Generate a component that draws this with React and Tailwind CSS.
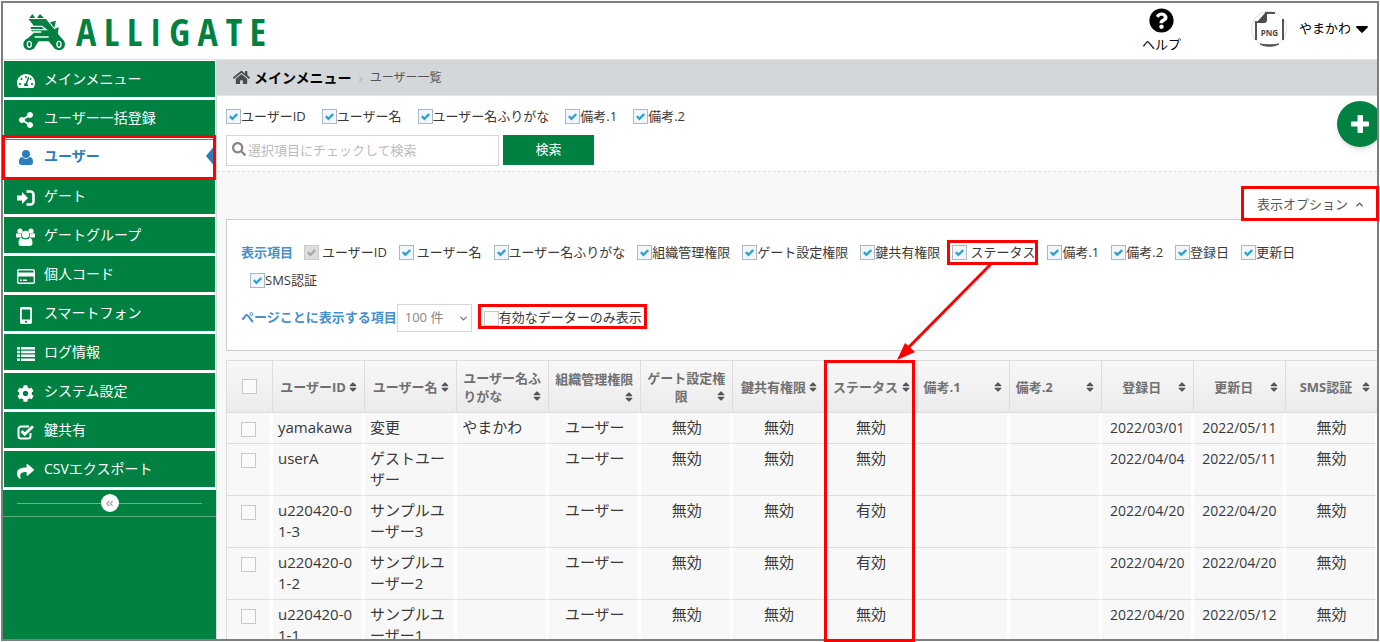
import React, { useState } from 'react';
import {
    FaTachometerAlt,
    FaShareAlt,
    FaCog,
    FaShare,
    FaHome,
    FaSearch,
    FaSort,
    FaQuestionCircle,
    FaAngleDoubleLeft,
} from 'react-icons/fa';
import { LuChevronDown, LuChevronUp } from 'react-icons/lu';

const UserIcon = () => (
    <svg width="14" height="15" viewBox="0 0 14 15" fill="currentColor">
        <circle cx="7" cy="4" r="4" />
        <path d="M0 12.200C0 9.200.9 7 3.200 7 4.300 8.200 5.600 8.800 7 8.800S9.700 8.200 10.800 7C13.100 7 14 9.200 14 12.200 14 14 13 15 11.500 15h-9C1 15 0 14 0 12.200z" />
    </svg>
);

const SignInIcon = () => (
    <svg width="18" height="16" viewBox="0 0 18 16" fill="none">
        <path d="M0 5.500h5V2l6 6-6 6v-3.500H0z" fill="currentColor" />
        <path d="M9.500 1.500h4a3 3 0 0 1 3 3v7a3 3 0 0 1-3 3h-4" stroke="currentColor" strokeWidth="2.600" />
    </svg>
);

const GroupIcon = () => (
    <svg width="19" height="18" viewBox="0 0 19 18" fill="currentColor">
        <circle cx="4" cy="3" r="2.600" />
        <circle cx="15" cy="3" r="2.600" />
        <path d="M0 9V7c0-1.500.8-2 2-1.500 1.200.6 2.200.6 3.200 0A5 5 0 0 0 6 9.500H1.500C.5 9.500 0 9.400 0 9zM19 9V7c0-1.500-.8-2-2-1.500-1.200.6-2.200.6-3.200 0A5 5 0 0 1 13 9.500h4.500c1 0 1.500-.1 1.500-.5z" />
        <circle cx="9.500" cy="6.500" r="3.700" />
        <path d="M2.500 15.200c0-3.200.8-5.200 3-5.200 1.200 1 2.500 1.400 4 1.400s2.800-.4 4-1.400c2.200 0 3 2 3 5.200 0 1.800-1 2.800-2.600 2.800H5.100c-1.600 0-2.600-1-2.600-2.800z" />
    </svg>
);

const CardIcon = () => (
    <svg width="18" height="15" viewBox="0 0 18 15" fill="none">
        <rect x="0.700" y="0.700" width="16.600" height="13.600" rx="1.400" stroke="currentColor" strokeWidth="1.400" />
        <path d="M1 3.500h16v4H1zM3 10.500h2v1.500H3zM6 10.500h4v1.500H6z" fill="currentColor" />
    </svg>
);

const MobileIcon = () => (
    <svg width="12" height="17" viewBox="0 0 12 17" fill="currentColor" fillRule="evenodd">
        <path d="M1.800 0h8.400A1.800 1.800 0 0 1 12 1.800v13.400a1.800 1.800 0 0 1-1.800 1.800H1.800A1.800 1.800 0 0 1 0 15.200V1.800A1.800 1.800 0 0 1 1.800 0zM1.800 2.500v10h8.400v-10zM6 13.700a1.100 1.100 0 1 0 0 2.200 1.100 1.100 0 0 0 0-2.200z" />
    </svg>
);

const ListIcon = () => (
    <svg width="18" height="14" viewBox="0 0 18 14" fill="currentColor">
        <path d="M0 0h3v2.500H0zM4 0h14v2.500H4zM0 3.800h3v2.500H0zM4 3.800h14v2.500H4zM0 7.600h3v2.500H0zM4 7.600h14v2.500H4zM0 11.400h3v2.500H0zM4 11.400h14v2.500H4z" />
    </svg>
);

const CheckBoxIcon = () => (
    <svg width="18" height="16" viewBox="0 0 18 16" fill="none" stroke="currentColor">
        <path d="M13.500 9v3a2.500 2.500 0 0 1-2.500 2.500H4A2.500 2.500 0 0 1 1.500 12V5A2.500 2.500 0 0 1 4 2.500h8" strokeWidth="2" />
        <path d="M4.500 7l3.200 3.200L16 2.300" strokeWidth="2.800" />
    </svg>
);

const AlligateMark = () => (
    <svg width="54" height="46" viewBox="0 0 162 138" fill="#008142">
        <path d="M34 30L43 18L52 30zM57 30L66 18L78 30z" />
        <path d="M96 43L114 38L109 60zM108 64L122 57L120 78z" />
        <path d="M31 33H84L137 98L112 124L92 100H62L46 124L20 99L48 74L38 66V58L48 56L42 46z" />
        <path d="M36 55H72L84 65H36" fill="none" stroke="#fff" strokeWidth="4" />
        <path d="M44 72H70M50 87H92" fill="none" stroke="#fff" strokeWidth="4" />
        <circle cx="34" cy="109" r="18" />
        <circle cx="123" cy="109" r="18" />
        <ellipse cx="34" cy="109" rx="6" ry="9" fill="none" stroke="#fff" strokeWidth="4" />
        <ellipse cx="123" cy="109" rx="6" ry="9" fill="none" stroke="#fff" strokeWidth="4" />
    </svg>
);

const menuItems = [
    { label: 'メインメニュー', icon: <FaTachometerAlt size={18} /> },
    { label: 'ユーザー一括登録', icon: <FaShareAlt size={16} /> },
    { label: 'ユーザー', icon: <UserIcon />, active: true },
    { label: 'ゲート', icon: <SignInIcon /> },
    { label: 'ゲートグループ', icon: <GroupIcon /> },
    { label: '個人コード', icon: <CardIcon /> },
    { label: 'スマートフォン', icon: <MobileIcon /> },
    { label: 'ログ情報', icon: <ListIcon /> },
    { label: 'システム設定', icon: <FaCog size={17} /> },
    { label: '鍵共有', icon: <CheckBoxIcon /> },
    { label: 'CSVエクスポート', icon: <FaShare size={17} /> },
];

const searchFields = ['ユーザーID', 'ユーザー名', 'ユーザー名ふりがな', '備考.1', '備考.2'];

const displayFields = [
    { label: 'ユーザーID', disabled: true, spaced: true },
    { label: 'ユーザー名', spaced: true },
    { label: 'ユーザー名ふりがな' },
    { label: '組織管理権限' },
    { label: 'ゲート設定権限' },
    { label: '鍵共有権限' },
    { label: 'ステータス', spaced: true },
    { label: '備考.1' },
    { label: '備考.2' },
    { label: '登録日' },
    { label: '更新日' },
    { label: 'SMS認証' },
];

const columns = [
    { label: 'ユーザーID' },
    { label: 'ユーザー名' },
    { label: 'ユーザー名ふりがな', left: true },
    { label: '組織管理権限' },
    { label: 'ゲート設定権限' },
    { label: '鍵共有権限' },
    { label: 'ステータス' },
    { label: '備考.1', left: true },
    { label: '備考.2', left: true },
    { label: '登録日' },
    { label: '更新日' },
    { label: 'SMS認証' },
];

const users = [
    { id: 'yamakawa', name: '変更', kana: 'やまかわ', status: '無効', created: '2022/03/01', updated: '2022/05/11' },
    { id: 'userA', name: 'ゲストユーザー', kana: '', status: '無効', created: '2022/04/04', updated: '2022/05/11' },
    { id: 'u220420-01-3', name: 'サンプルユーザー3', kana: '', status: '有効', created: '2022/04/20', updated: '2022/04/20' },
    { id: 'u220420-01-2', name: 'サンプルユーザー2', kana: '', status: '有効', created: '2022/04/20', updated: '2022/04/20' },
    { id: 'u220420-01-1', name: 'サンプルユーザー1', kana: '', status: '無効', created: '2022/04/20', updated: '2022/05/12' },
];

const Tick = ({ checked = false, disabled = false, ...rest }) => (
    <span className="relative block size-[15px] shrink-0">
        <input
            type="checkbox"
            defaultChecked={checked}
            disabled={disabled}
            className="peer block size-[15px] appearance-none border border-[#c8c8c8] bg-[#fafafa] checked:border-[#adb8c0] checked:bg-[#f1f6fb] disabled:border-[#ccc] disabled:bg-[#ddd]"
            {...rest}
        />
        <svg
            width="9"
            height="8"
            viewBox="0 0 9 8"
            className="pointer-events-none absolute left-[3px] top-1 hidden text-[#32a3ce] peer-checked:block peer-disabled:text-[#aaa]"
        >
            <path d="M0.800 3.200L3.400 5.800L8.200 1" fill="none" stroke="currentColor" strokeWidth="2.400" />
        </svg>
    </span>
);

const Header = () => (
    <header className="flex h-[57px] shrink-0 items-center justify-between border-b border-[#e0e2e4] bg-white pl-[15px] pr-[9px]">
        <a href="#top" aria-label="ALLIGATE" className="flex items-center gap-1 text-[#008142]">
            <AlligateMark />
            <span className="flex w-[190px] justify-between font-['Open_Sans_Condensed','Roboto_Condensed','Liberation_Sans_Narrow',sans-serif] text-[38px] font-bold leading-[46px]">
                {'ALLIGATE'.split('').map((letter, i) => (
                    <span key={i}>{letter}</span>
                ))}
            </span>
        </a>
        <div className="flex items-center text-[13px] text-black">
            <a href="#help" className="mr-[70px] flex flex-col items-center">
                <FaQuestionCircle size={25} />
                <span className="leading-[22px]">ヘルプ</span>
            </a>
            <button type="button" className="flex items-center pb-1">
                <svg width="36" height="36" viewBox="0 0 36 36" className="mr-3">
                    <circle cx="18" cy="18" r="17.500" fill="#fff" stroke="#ddd" />
                    <path d="M5 10v19M32 8v21M14 2h10" stroke="#555" strokeWidth="2" fill="none" />
                    <path d="M9 33C14 36 23 36 28 33C23 34 14 34 9 33z" fill="#555" stroke="#555" />
                    <path d="M5 12L14 2h2v7a3 3 0 0 1-3 3z" fill="#4a4d50" />
                    <text x="18.500" y="25" textAnchor="middle" fontSize="8" fontWeight="700" fill="#4a4d50" fontFamily="Open Sans, sans-serif">PNG</text>
                </svg>
                <span className="mr-[5px]">やまかわ</span>
                <svg width="12" height="7" viewBox="0 0 12 7">
                    <path d="M1 0h10a1 1 0 0 1 .6 1.500L6.700 6.600a1 1 0 0 1-1.400 0L.4 1.500A1 1 0 0 1 1 0z" fill="currentColor" />
                </svg>
            </button>
        </div>
    </header>
);

const Sidebar = () => (
    <aside className="flex w-[214px] shrink-0 flex-col border-r border-[#d5d8da] bg-[#008142]">
        <nav className="flex flex-col gap-[3px] bg-white px-px pb-[3px] pt-px">
            {menuItems.map((item) => (
                <a
                    key={item.label}
                    href="#menu"
                    className={
                        item.active
                            ? 'relative flex h-[36px] items-center border-t border-[#4a8f5c] bg-white pb-1 pl-3 text-sm font-bold text-[#2b7dbc]'
                            : 'flex h-[36px] items-center bg-[#008142] pl-3 text-sm text-white'
                    }
                >
                    <span className="mr-[9px] flex w-[19px] justify-center pt-1">{item.icon}</span>
                    <span>{item.label}</span>
                    {item.active && (
                        <span className="absolute right-0 h-0 w-0 border-y-[11px] border-r-[9px] border-y-transparent border-r-[#2b7dbc]" />
                    )}
                </a>
            ))}
        </nav>
        <div className="flex h-[27px] items-center border-b border-[#5cac82] px-[14px]">
            <span className="h-px flex-1 bg-[#66b18a]" />
            <button type="button" aria-label="collapse" className="flex size-[18px] items-center justify-center rounded-full bg-white text-[#aaa]">
                <FaAngleDoubleLeft size={9} />
            </button>
            <span className="h-px flex-1 bg-[#66b18a]" />
        </div>
    </aside>
);

const SearchBar = () => (
    <section className="relative shrink-0 border-b border-dashed border-[#dedede] bg-white px-[9px] pb-[5px] pt-[11px]">
        <div className="flex gap-4 text-[13px] leading-[18px] text-[#393939]">
            {searchFields.map((field) => (
                <label key={field} className="flex items-center">
                    <Tick checked />
                    {field}
                </label>
            ))}
        </div>
        <form className="mt-[10px] flex gap-1" onSubmit={(e) => e.preventDefault()}>
            <div className="relative w-[273px]">
                <FaSearch size={14} className="absolute left-[6px] top-[7px] text-[#888]" />
                <input
                    type="text"
                    aria-label="検索"
                    placeholder="選択項目にチェックして検索"
                    className="h-[31px] w-full border border-[#d5d5d5] pb-[2px] pl-[21px] text-[13px] placeholder:text-[#bbb]"
                />
            </div>
            <button type="submit" className="h-[30px] w-[91px] bg-[#008142] text-[13px] text-white">
                検索
            </button>
        </form>
        <button
            type="button"
            aria-label="add"
            className="absolute -right-[6px] top-[5px] flex size-[46px] items-center justify-center rounded-full bg-[#008142] text-white shadow-md"
        >
            <svg width="18" height="18" viewBox="0 0 18 18" fill="currentColor">
                <path d="M7 0h4a1 1 0 0 1 1 1v5.500h5a1 1 0 0 1 1 1v3a1 1 0 0 1-1 1h-5V17a1 1 0 0 1-1 1H7.500a1 1 0 0 1-1-1v-5.500H1a1 1 0 0 1-1-1v-3a1 1 0 0 1 1-1h5.500V1a1 1 0 0 1 1-1z" />
            </svg>
        </button>
    </section>
);

const DisplayOptions = ({ open, onToggle }) => (
    <section className="shrink-0 pl-[9px]">
        <div className="flex justify-end pt-4">
            <button type="button" onClick={onToggle} className="flex h-[31px] items-center gap-[6px] bg-white pl-[15px] pr-3 pt-[2px] text-[13px] text-[#555]">
                表示オプション
                {open ? <LuChevronUp size={11} strokeWidth={3} /> : <LuChevronDown size={11} strokeWidth={3} />}
            </button>
        </div>
        {open && (
            <div className="border border-r-0 border-[#ccc] bg-white pb-[18px] pl-[14px] pr-[5px] pt-[18px] text-[13px] text-[#393939]">
                <div className="flex flex-wrap leading-[28px]">
                    <span className="mr-[2px] font-bold text-[#478fca]">表示項目</span>
                    {displayFields.map((field) => (
                        <label
                            key={field.label}
                            className={field.spaced ? 'ml-[9px] mr-[3px] flex items-center gap-[3px]' : 'ml-[9px] mr-[3px] flex items-center'}
                        >
                            <Tick checked disabled={field.disabled} />
                            {field.label}
                        </label>
                    ))}
                </div>
                <div className="mt-[10px] flex items-center">
                    <label htmlFor="perPage" className="font-bold text-[#478fca]">
                        ページことに表示する項目
                    </label>
                    <div className="relative">
                        <select id="perPage" className="h-[28px] w-[75px] appearance-none border border-[#d5d5d5] bg-white pl-[7px] text-[13px] text-[#858585]">
                            <option>100 件</option>
                            <option>50 件</option>
                        </select>
                        <LuChevronDown size={11} strokeWidth={3} className="pointer-events-none absolute right-[3px] top-[9px] text-[#777]" />
                    </div>
                    <label className="ml-3 flex items-center">
                        <Tick />
                        有効なデーターのみ表示
                    </label>
                </div>
            </div>
        )}
    </section>
);

const cell = 'border-b border-b-[#ddd] border-l border-l-white border-r-2 border-r-white pl-[5px] pr-[3px] pb-[5px] pt-1 align-top leading-[21px]';

const UserTable = () => (
    <section className="min-h-0 overflow-hidden pl-[9px] pt-[9px]">
        <table className="w-full table-fixed border-separate border-spacing-0 text-[15px] text-[#393939]">
            <thead>
                <tr className="bg-linear-to-b from-[#f8f8f8] to-[#ebebeb] text-[13px] leading-[18px] text-[#707070]">
                    <th className="h-[53px] w-[46px] border border-r-0 border-[#ddd]">
                        <div className="flex justify-center">
                            <Tick aria-label="select all" />
                        </div>
                    </th>
                    {columns.map((column) => (
                        <th
                            key={column.label}
                            className={
                                column.left
                                    ? 'border-y border-l border-[#ddd] pl-[6px] pr-[7px] text-left font-bold'
                                    : 'border-y border-l border-[#ddd] pl-[6px] pr-[7px] text-center font-bold'
                            }
                        >
                            {column.label}
                            <FaSort size={12} className="float-right -mr-[2px] mt-[3px] text-[#555]" />
                        </th>
                    ))}
                </tr>
            </thead>
            <tbody>
                {users.map((user) => (
                    <tr key={user.id}>
                        <td className="border-b border-l border-r-2 border-b-[#ddd] border-l-[#ddd] border-r-white pt-[9px] align-top">
                            <div className="flex justify-center">
                                <Tick aria-label={user.id} />
                            </div>
                        </td>
                        <td className={`${cell} break-all`}>{user.id}</td>
                        <td className={`${cell} [line-break:anywhere]`}>{user.name}</td>
                        <td className={cell}>{user.kana}</td>
                        <td className={`${cell} text-center`}>ユーザー</td>
                        <td className={`${cell} text-center`}>無効</td>
                        <td className={`${cell} text-center`}>無効</td>
                        <td className={`${cell} text-center`}>{user.status}</td>
                        <td className={cell}></td>
                        <td className={cell}></td>
                        <td className={`${cell} text-center text-sm`}>{user.created}</td>
                        <td className={`${cell} text-center text-sm`}>{user.updated}</td>
                        <td className={`${cell} text-center`}>無効</td>
                    </tr>
                ))}
            </tbody>
        </table>
    </section>
);

// red callouts drawn over the page
const Callouts = () => (
    <svg width="1380" height="642" className="pointer-events-none absolute left-0 top-0" fill="none" stroke="#f00" strokeWidth="3">
        <rect x="3.500" y="136.500" width="211" height="42" />
        <rect x="1242.500" y="187.500" width="135" height="32" />
        <rect x="948.500" y="241.500" width="88" height="22" />
        <rect x="479.500" y="305.500" width="166" height="22" />
        <rect x="825.500" y="361.500" width="88" height="279" />
        <path d="M991 264L906 350" />
        <path d="M897 360L905 343L915 352z" fill="#f00" stroke="none" />
    </svg>
);

const App = () => {
    const [open, setOpen] = useState(true);

    return (
        <div className="relative h-screen overflow-hidden bg-white p-px font-['Open_Sans','Noto_Sans_CJK_JP',sans-serif]">
            <div className="flex h-full flex-col overflow-hidden border-2 border-[#7f7f7f]">
                <Header />
                <div className="flex min-h-0 flex-1">
                    <Sidebar />
                    <main className="flex min-w-0 flex-1 flex-col overflow-hidden bg-[#f8f8f8]">
                        <div className="flex h-[36px] shrink-0 items-center border-b border-[#e5e5e5] bg-[#d3d7da] pl-4">
                            <FaHome size={17} className="mr-1 text-[#4c4c4c]" />
                            <a href="#main" className="text-sm font-bold text-black">
                                メインメニュー
                            </a>
                            <span className="mx-[7px] text-sm text-[#b2b6bf]">›</span>
                            <span className="text-xs text-[#555]">ユーザー一覧</span>
                        </div>
                        <SearchBar />
                        <DisplayOptions open={open} onToggle={() => setOpen(!open)} />
                        <UserTable />
                    </main>
                </div>
            </div>
            <Callouts />
        </div>
    );
};

export default App;
